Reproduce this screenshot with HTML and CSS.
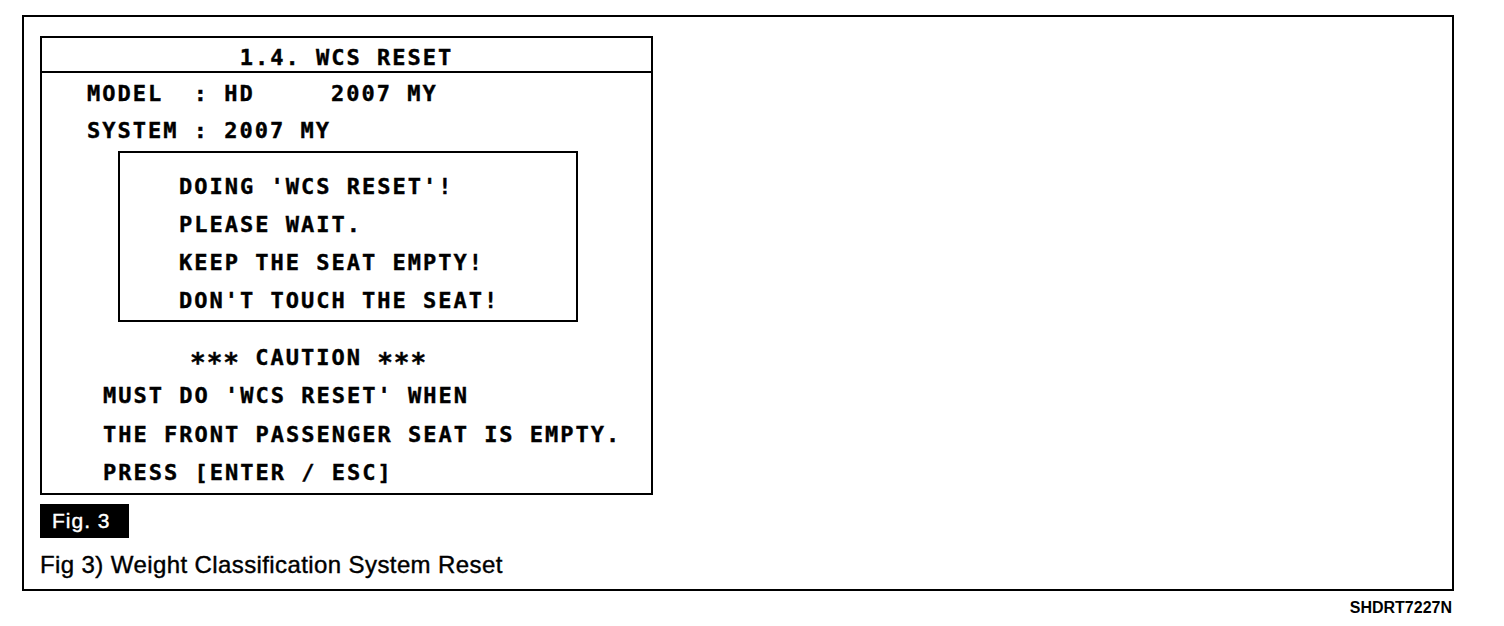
FILE: index.html
```html
<!DOCTYPE html>
<html lang="en">
<head>
  <meta charset="UTF-8">
  <title>Fig 3 - WCS Reset</title>
  <link rel="stylesheet" href="styles.css">
</head>
<body>
  <div class="page">
    <div class="frame">
      <!-- scan tool screen -->
      <div class="screen">
        <div class="screen-title">1.4. WCS RESET</div>
        <div class="screen-body">
          <div class="info">
            <div class="row">MODEL  : HD     2007 MY</div>
            <div class="row">SYSTEM : 2007 MY</div>
          </div>
          <div class="dialog">
            <div class="row">DOING 'WCS RESET'!</div>
            <div class="row">PLEASE WAIT.</div>
            <div class="row">KEEP THE SEAT EMPTY!</div>
            <div class="row">DON'T TOUCH THE SEAT!</div>
          </div>
          <div class="caution"><span class="stars">***</span> CAUTION <span class="stars">***</span></div>
          <div class="notes">
            <div class="row">MUST DO 'WCS RESET' WHEN</div>
            <div class="row">THE FRONT PASSENGER SEAT IS EMPTY.</div>
            <div class="row">PRESS [ENTER / ESC]</div>
          </div>
        </div>
      </div>
      <div class="fig-badge">Fig. 3</div>
      <div class="fig-caption">Fig 3) Weight Classification System Reset</div>
    </div>
    <div class="code">SHDRT7227N</div>
  </div>
</body>
</html>
```
FILE: styles.css
```css
/* Page */
body {
  margin: 0;
  background: #fff;
  color: #000;
  font-family: "Liberation Sans", Arial, sans-serif;
}

.page {
  padding: 15px 0 0 22px;
  width: 1432px;
}

.frame {
  box-sizing: border-box;
  height: 576px;
  border: 2px solid #000;
  padding: 19px 16px 0;
}

/* Screen */
.screen {
  box-sizing: border-box;
  width: 613px;
  height: 459px;
  border: 2px solid #000;
  font-family: "DejaVu Sans Mono", monospace;
  font-weight: bold;
  font-size: 22px;
  letter-spacing: 2px;
  -webkit-text-stroke: 0.4px #000;
}

.screen-title {
  box-sizing: border-box;
  height: 35px;
  padding-top: 7px;
  line-height: 26px;
  text-align: center;
  border-bottom: 2px solid #000;
}

.row {
  line-height: 37px;
  white-space: pre;
}

.info {
  margin-top: 2px;
  padding-left: 45px;
}

.dialog {
  box-sizing: border-box;
  width: 460px;
  height: 171px;
  margin: 2px 0 0 76px;
  padding: 15px 0 0 59px;
  border: 2px solid #000;
}

.dialog .row {
  line-height: 38px;
}

.caution {
  margin-top: 17px;
  padding-left: 148px;
  line-height: 38px;
  white-space: pre;
}

.stars {
  font-size: 26px;
  letter-spacing: 1px;
  vertical-align: -7px;
  line-height: 1;
}

.notes {
  padding-left: 61px;
}

.notes .row {
  line-height: 38.5px;
}

/* Caption */
.fig-badge {
  display: inline-block;
  margin-top: 9px;
  width: 89px;
  height: 34px;
  box-sizing: border-box;
  padding-left: 12px;
  background: #000;
  color: #fff;
  font-size: 21px;
  letter-spacing: 1px;
  line-height: 34px;
  -webkit-text-stroke: 0.4px #fff;
}

.fig-caption {
  margin-top: 12px;
  font-size: 24px;
  line-height: 30px;
  letter-spacing: 0.4px;
  -webkit-text-stroke: 0.4px #000;
}

.code {
  padding: 8px 2px 0 0;
  text-align: right;
  font-size: 16px;
  line-height: 18px;
  font-weight: bold;
}
```
